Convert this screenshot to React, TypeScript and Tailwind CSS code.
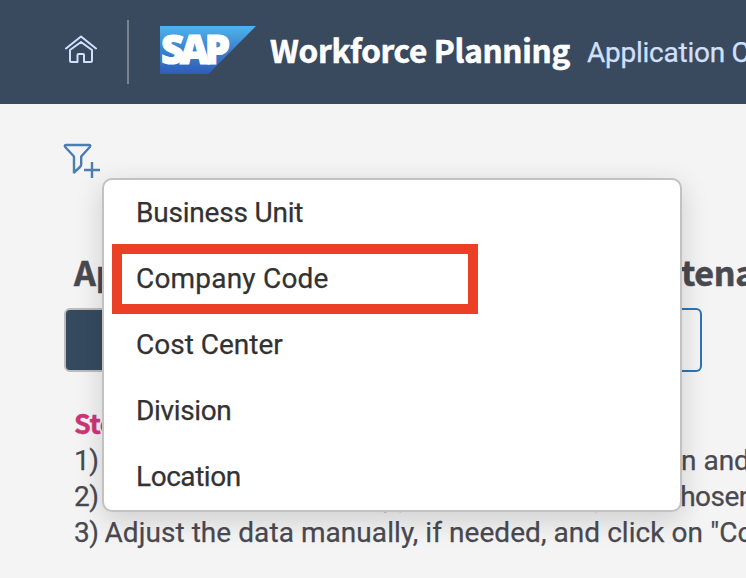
const OPTIONS = [
  { label: 'Business Unit', spacing: 'tracking-[-0.2px]' },
  { label: 'Company Code', spacing: 'tracking-[0.2px]' },
  { label: 'Cost Center', spacing: 'tracking-[0px]' },
  { label: 'Division', spacing: 'tracking-[-0.35px]' },
  { label: 'Location', spacing: 'tracking-[-0.45px]' },
];

function HomeIcon() {
  return (
    <svg className="block h-8 w-8" viewBox="0 0 32 32" fill="none" stroke="#d1e0ff" strokeWidth="2" strokeLinecap="round" strokeLinejoin="round">
      <path d="M1 14.5 16 2.5 31 14.5" />
      <path d="M5 16V26.5Q5 28 6.5 28H12.5V21Q12.5 20 13.5 20H18Q19 20 19 21V28H25.5Q27 28 27 26.5V16L16 8Z" />
    </svg>
  );
}

function SapLogo() {
  return (
    <svg className="block h-12 w-24" viewBox="0 0 96 48">
      <defs>
        <linearGradient id="sap" x1="0" y1="0" x2="0" y2="1">
          <stop offset="0" stopColor="#50b4ec" />
          <stop offset="0.45" stopColor="#3b86d1" />
          <stop offset="1" stopColor="#315cb8" />
        </linearGradient>
      </defs>
      <path d="M0 0H96L48.5 48H0Z" fill="url(#sap)" />
      <text x="1" y="38" textLength="69" lengthAdjust="spacing" fill="#fff" stroke="#fff" strokeWidth="1.2" className="font-['Open_Sans',sans-serif] text-[40px] font-extrabold">SAP</text>
    </svg>
  );
}

function AddFilterIcon() {
  return (
    <svg className="block h-9 w-10" viewBox="0 0 40 36" fill="none" stroke="#4d7cb0" strokeWidth="2.4" strokeLinejoin="round">
      <path d="M3.2 3H25.8Q28.2 3 26.8 5L18.2 14.5V22.5Q18 24 17 25L11 30.5V14.5L2.2 5Q1 3 3.2 3Z" />
      <path d="M21 28H37M29 20V36" />
    </svg>
  );
}

export default function App() {
  return (
    <div className="relative h-[578px] w-[746px] overflow-hidden whitespace-nowrap bg-[#f4f4f4] font-[Roboto,sans-serif] text-[28px] text-[#4a4950] [-webkit-text-stroke:0.25px]">
      <header className="flex h-[104px] items-start bg-[#39495e] pl-[65px] *:shrink-0">
        <div className="mt-[34px]"><HomeIcon /></div>
        <div className="ml-[30px] mt-5 h-16 w-[2px] bg-[#7a8491]" />
        <div className="ml-[31px] mt-[26px]"><SapLogo /></div>
        <h1 className="ml-[14px] mt-[29px] w-[317px] font-['Noto_Sans_CJK_SC',sans-serif] text-[31.5px] font-bold leading-10 tracking-[-0.3px] text-white [-webkit-text-stroke:0.6px]">Workforce Planning</h1>
        <span className="mt-[33px] leading-10 tracking-[-0.25px] text-[#d1e0ff]">Application Configuration</span>
      </header>

      <main>
        <div className="ml-[63px] mt-[38px] h-[36px]"><AddFilterIcon /></div>
        <h2 className="ml-[74px] mt-[71px] flex h-[46px] font-['Noto_Sans_CJK_SC',sans-serif] text-[34px] font-bold leading-[46px] [-webkit-text-stroke:0.6px] *:shrink-0">
          <span className="w-[607px]">Application Data</span>
          <span className="tracking-[-0.3px]">tenance</span>
        </h2>
        <div className="ml-16 mt-[13px] flex h-16 w-[638px]">
          <div className="w-1/2 rounded-l-[6px] border-2 border-[#bdbcbc] bg-[#364a5f]" />
          <div className="w-1/2 rounded-r-[6px] border-2 border-l-0 border-[#2e74b5] bg-[#f5f5f5]" />
        </div>
        <section className="ml-[74px] mt-[33px] leading-9">
          <h3 className="font-['Noto_Sans_CJK_SC',sans-serif] text-[27px] font-bold leading-9 tracking-[-0.5px] text-[#cd3577] [-webkit-text-stroke:0.4px]">Steps</h3>
          <div className="mt-[2px] flex h-9 *:shrink-0"><span className="w-[607px] tracking-[-0.5px]">1)</span><span>n and</span></div>
          <div className="flex h-9 *:shrink-0">
            <span className="w-[308px] tracking-[-0.5px]">2)</span>
            <span className="w-[211px]">py</span>
            <span className="w-[73px]">y</span>
            <span className="tracking-[-0.5px]">chosen</span>
          </div>
          <p className="flex gap-[6px] tracking-[0.06px]">
            <span className="tracking-[-0.5px]">3)</span>
            <span>Adjust the data manually, if needed, and click on "Copy</span>
          </p>
        </section>
      </main>

      <div className="absolute left-[102px] top-[178px] h-[334px] w-[580px] rounded-[10px] border-2 border-[#c2c2c2] bg-white bg-clip-padding text-[#323232] shadow-[0_8px_28px_rgba(0,0,0,0.16)]">
        <ul>
          {OPTIONS.map(({ label, spacing }) => (
            <li key={label} className={`flex h-[66px] items-center pl-8 ${spacing}`}>{label}</li>
          ))}
        </ul>
        <div className="absolute left-[8px] top-[64px] h-[70px] w-[366px] border-[10px] border-[#eb4026]" />
      </div>
    </div>
  );
}
